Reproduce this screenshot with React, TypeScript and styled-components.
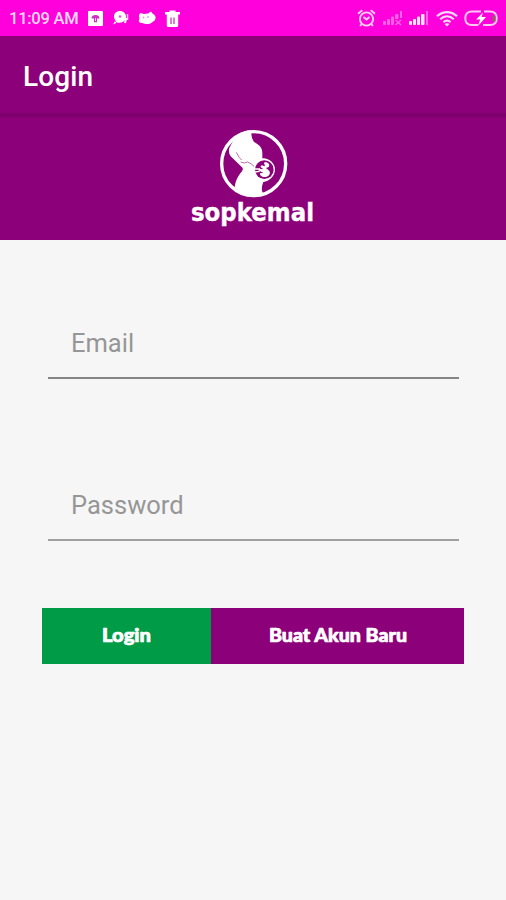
import React from "react";
import styled, { createGlobalStyle } from "styled-components";

const purple = "#8c007a";

const GlobalStyle = createGlobalStyle`
  * { box-sizing: border-box; }
  body { margin: 0; background: #f6f6f6; font-family: Roboto, sans-serif; }
`;

const Screen = styled.main`
  display: flex;
  flex-direction: column;
  width: 506px;
  height: 900px;
  background: #f6f6f6;
  overflow: hidden;
`;

const StatusBar = styled.header`
  display: flex;
  align-items: center;
  justify-content: space-between;
  height: 36px;
  padding: 0 8px 0 9px;
  background: #ff00dc;
  color: #ffd9fa;
  flex: none;
`;

const StatusGroup = styled.div<{ $gap: number }>`
  display: flex;
  align-items: center;
  gap: ${(p) => p.$gap}px;
  svg { display: block; }
`;

const Clock = styled.span`
  width: 70px;
  font-size: 16.5px;
  font-weight: 500;
  line-height: 20px;
  letter-spacing: -0.25px;
  white-space: nowrap;
  padding-top: 2px;
`;

const AppBar = styled.div`
  display: flex;
  align-items: center;
  height: 82px;
  padding: 0 23px;
  background: linear-gradient(${purple} 76px, #7c0069 78px, #7d006c 80px, ${purple} 82px);
  flex: none;
`;

const Title = styled.h1`
  margin: 0;
  color: #fff;
  font-size: 28px;
  font-weight: 500;
  line-height: 32px;
  letter-spacing: 0.1px;
`;

const Banner = styled.section`
  display: flex;
  flex-direction: column;
  align-items: center;
  height: 122px;
  padding-top: 8px;
  background: ${purple};
  flex: none;
  svg { display: block; flex: none; }
  svg + svg { margin-top: -12px; }
`;

const Form = styled.form`
  display: flex;
  flex-direction: column;
  padding: 76px 42px 0;
`;

const Field = styled.input<{ $line: string; $gap: number }>`
  display: block;
  height: 63px;
  margin: 0 5px ${(p) => p.$gap}px 6px;
  padding: 0 22px 7px 23px;
  border: 0;
  border-bottom: 2px solid ${(p) => p.$line};
  border-radius: 0;
  outline: 0;
  background: transparent;
  color: #333;
  font: 400 25.5px/32px Roboto, sans-serif;
  &::placeholder { color: #969696; opacity: 1; }
`;

const Actions = styled.div`
  display: flex;
  height: 56px;
`;

const Action = styled.button<{ $color: string; $width: number }>`
  width: ${(p) => p.$width}px;
  height: 56px;
  padding: 0;
  border: 0;
  background: ${(p) => p.$color};
  svg { display: block; margin: 0 auto; }
`;

const Label = ({ text, width }: { text: string; width: number }) => (
  <svg width={width} height="28" viewBox={`0 0 ${width} 28`}>
    <text x="2" y="20" textLength={width - 3} lengthAdjust="spacingAndGlyphs"
      fontFamily="Lato, sans-serif" fontWeight="900" fontSize="18"
      fill="#fff" stroke="#fff" strokeWidth="0.7" strokeLinejoin="round">{text}</text>
  </svg>
);

const UploadIcon = () => (
  <svg width="15" height="15" viewBox="0 0 15 15">
    <rect width="15" height="15" rx="1" fill="#fff" />
    <path d="M3.5 7.5a4 3.6 0 0 1 8 0H9v3.8H6V7.5z" fill="#d02fbf" />
    <path d="M7.500 7v3" stroke="#fff" strokeWidth=".8" />
  </svg>
);

const ChatIcon = () => (
  <svg width="17" height="16" viewBox="0 0 17 16">
    <path d="M8 1C4.600 1 2 3.300 2 6.500c0 1.500.6 2.800 1.500 3.800L1 14.500l4.500-2c4.600 1.200 8.500-1.800 8.500-5.700C14 3.500 11.500 1 8 1Z" fill="#fff" />
    <path d="M10 9h4l-1 4" fill="none" stroke="#fff" strokeWidth="2" />
    <circle cx="8" cy="6.500" r="1.300" fill="#ef4edc" />
    <path d="m3 11 2 2" stroke="#ff00dc" strokeWidth=".7" />
    <path d="M15.500 4v6" stroke="#ffd1f8" strokeWidth="1.500" />
  </svg>
);

const CatIcon = () => (
  <svg width="18" height="16" viewBox="0 0 18 16">
    <path d="M2.500 3 6 4l4-.5 3-2 2 2.500c2 1 3 2.500 2.500 4.500-.5 2.500-2 2.500-3.500 4-2.500 2-7 2-9.500.5C1 13 0 11 1.500 8.500.5 6 1 4 2.500 3z" fill="#fff" />
    <circle cx="5.500" cy="7.500" r=".9" fill="#f78cec" />
    <circle cx="10" cy="7" r=".9" fill="#f78cec" />
  </svg>
);

const TrashIcon = () => (
  <svg width="15" height="17" viewBox="0 0 15 17">
    <path d="M0 2h4.500V.5h6V2H15v2.500H0zM1.800 4h11.400v11.500q0 1.500-1.500 1.500H3.300q-1.500 0-1.500-1.500z" fill="#fff" />
    <path d="M6 7.500V14M9 7.500V14" stroke="#c527b3" strokeWidth="1.200" />
  </svg>
);

const AlarmIcon = () => (
  <svg width="19" height="18" viewBox="0 0 19 18" fill="none" stroke="#ffd0f7" strokeWidth="1.900">
    <circle cx="9.500" cy="10" r="6.600" />
    <path d="M1 4.800 5.300 1.200M18 4.800l-4.300-3.600M6.500 8l3 2.500L12.500 8M4.500 15l-1.300 2M14.500 15l1.300 2" />
  </svg>
);

const SignalIcon = ({ weak }: { weak?: boolean }) => (
  <svg width="20" height="16" viewBox="0 0 20 16">
    <g fill={weak ? "#ff62e6" : "#ffe3fb"}>
      <rect x="0" y="11" width="3" height="4" rx="1" />
      <rect x="4" y="9" width="3" height="6" rx="1" />
      <rect x="8" y="6.500" width="3" height="8.500" rx="1" />
      <rect x="12" y="4" width="3.500" height={weak ? 5 : 11} rx="1" />
    </g>
    <rect x="17" y="1" width="2" height={weak ? 7 : 14} fill="#ff62e6" />
    {weak && <path d="m12.500 10 5.500 5m0-5-5.500 5" stroke="#ff62e6" strokeWidth="1.500" />}
  </svg>
);

const WifiIcon = () => (
  <svg width="22" height="17" viewBox="0 0 22 17" fill="none" stroke="#ffd9fa" strokeWidth="2.200">
    <path d="M1 6.200c6-5.500 14-5.500 20 0M4.200 9.300c4.200-3.800 9.400-3.800 13.600 0M7.400 12.200c2.300-1.900 4.900-1.900 7.200 0" />
    <path d="m8.500 14 2.500 2.500 2.500-2.500q-2.500-1.500-5 0z" fill="#ffd9fa" stroke="none" />
  </svg>
);

const BatteryIcon = () => (
  <svg width="34" height="17" viewBox="0 0 34 17" fill="none">
    <path d="M17 1.500H8C3.500 1.500 1.300 4 1.300 8.200S3.500 15 8 15h6M20 1.500h6c4.500 0 6.700 2.500 6.700 6.700S30.500 15 26 15h-7" stroke="#ffc8f5" strokeWidth="2" />
    <path d="M19 2.500 12 9.500h4.200L14 16l8-9h-4.500z" fill="#fff" />
    <path d="M28.500 5.500h3v6h-3z" fill="#8c655d" />
  </svg>
);

const Emblem = () => (
  <svg width="76" height="76" viewBox="0 0 228 228">
    <path d="M64 28C83 16 99 14 110 13q-4 20 7 35c16 9 25 17 25 32v17c19-2 38 14 38 33 0 22-18 36-35 38-5 14-7 25 0 36-28 11-62 3-86-20 3-22 10-33 22-48q5-8 0-12L47 91q-8-13-4-25c5-10 11-20 21-38Z" fill="#fff" />
    <circle cx="116" cy="113" r="96" fill="none" stroke="#fff" strokeWidth="10" />
    <circle cx="148" cy="131" r="28" fill={purple} />
    <path d="M147 110c10-5 20 5 14 13l-8 3 8 7c8 7 2 18-8 20-12 2-20-6-18-11l10-1-15-8 1-5 14 2-9-8 4-4 10 3z" fill="#fff" />
    <path d="M118 129h17M120 138l14-2" stroke="#fff" strokeWidth="4" />
    <path d="m64 79 9 16 7 7m-3 6 11 3 9-3 11 5 9 8" stroke="#a751a0" strokeWidth="2.500" fill="none" />
  </svg>
);

const Wordmark = () => (
  <svg width="134" height="48" viewBox="0 0 134 48">
    <text x="5" y="30.500" textLength="123" lengthAdjust="spacingAndGlyphs"
      fontFamily="DejaVu Sans, sans-serif" fontWeight="700" fontSize="24.500" fill="#fff" stroke="#fff" strokeWidth=".4">sopkemal</text>
  </svg>
);

export default function App() {
  return (
    <>
      <GlobalStyle />
      <Screen>
        <StatusBar>
          <StatusGroup $gap={8.9}>
            <Clock>11:09 AM</Clock>
            <UploadIcon />
            <ChatIcon />
            <CatIcon />
            <TrashIcon />
          </StatusGroup>
          <StatusGroup $gap={6.5}>
            <AlarmIcon />
            <SignalIcon weak />
            <SignalIcon />
            <WifiIcon />
            <BatteryIcon />
          </StatusGroup>
        </StatusBar>
        <AppBar><Title>Login</Title></AppBar>
        <Banner>
          <Emblem />
          <Wordmark />
        </Banner>
        <Form onSubmit={(e) => e.preventDefault()}>
          <Field type="email" placeholder="Email" aria-label="Email" $line="#858585" $gap={99} />
          <Field type="password" placeholder="Password" aria-label="Password" $line="#a0a0a0" $gap={67} />
          <Actions>
            <Action type="submit" $color="#009b46" $width={169}><Label text="Login" width={52} /></Action>
            <Action type="button" $color={purple} $width={254}><Label text="Buat Akun Baru" width={141} /></Action>
          </Actions>
        </Form>
      </Screen>
    </>
  );
}
